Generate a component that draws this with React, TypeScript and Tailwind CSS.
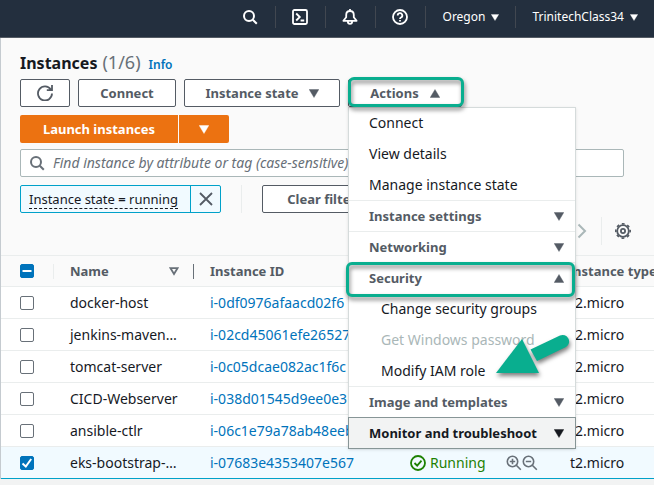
import type { ReactNode } from "react";

type Instance = { name: string; id: string; state?: string; selected?: boolean };

const instances: Instance[] = [
  { name: "docker-host", id: "i-0df0976afaacd02f6" },
  { name: "jenkins-maven…", id: "i-02cd45061efe26527" },
  { name: "tomcat-server", id: "i-0c05dcae082ac1f6c" },
  { name: "CICD-Webserver", id: "i-038d01545d9ee0e3" },
  { name: "ansible-ctlr", id: "i-06c1e79a78ab48eeb" },
  { name: "eks-bootstrap-…", id: "i-07683e4353407e567", state: "Running", selected: true },
];

function Triangle({ up = false, className = "" }: { up?: boolean; className?: string }) {
  return (
    <svg viewBox="0 0 10 9" className={`shrink-0 ${className}`} fill="currentColor" aria-hidden="true">
      <path d={up ? "M5 0.5 9.8 8.5H0.2z" : "M0.2 0.5H9.8L5 8.5z"} stroke="currentColor" strokeWidth="0.4" strokeLinejoin="round" />
    </svg>
  );
}

function SearchIcon({ className }: { className: string }) {
  return (
    <svg viewBox="0 0 16 16" className={className} fill="none" stroke="currentColor" strokeWidth="2" aria-hidden="true">
      <circle cx="7" cy="7" r="5" />
      <path d="m10.8 10.8 4 4" />
    </svg>
  );
}

function Checkbox({ label, state }: { label: string; state: "off" | "on" | "mixed" }) {
  return (
    <span className="grid size-[14px]">
      <input
        type="checkbox"
        aria-label={label}
        defaultChecked={state !== "off"}
        className="col-start-1 row-start-1 size-[14px] appearance-none rounded-xs border border-[#687078] bg-white checked:border-[#0073bb] checked:bg-[#0073bb]"
      />
      {state !== "off" && (
        <svg viewBox="0 0 14 14" className="pointer-events-none col-start-1 row-start-1 size-[14px]" fill="none" stroke="#fff" strokeWidth="2" aria-hidden="true">
          <path d={state === "on" ? "M2.5 7.5 5.8 10.5 11.2 3" : "M2.5 7H11.5"} />
        </svg>
      )}
    </span>
  );
}

function TopButton({ label, children }: { label: string; children: ReactNode }) {
  return (
    <button aria-label={label} className="flex h-[22px] w-[50px] items-center justify-center border-r border-[#414750]">
      {children}
    </button>
  );
}

function TopBar() {
  return (
    <header className="flex h-[38px] items-center justify-end border-b border-[#545b64] bg-[#232f3e] pr-4 pb-[3px] text-xs text-white">
      <TopButton label="Search">
        <SearchIcon className="size-4" />
      </TopButton>
      <TopButton label="CloudShell">
        <svg viewBox="0 0 16 16" className="size-4" fill="none" stroke="currentColor" strokeWidth="1.8">
          <rect x="1" y="1" width="14" height="14" rx="1.5" />
          <path d="m4.2 4.5 3.6 3.5-3.6 3.5M8.6 11.5h3.6" />
        </svg>
      </TopButton>
      <TopButton label="Notifications">
        <svg viewBox="0 0 16 16" className="size-4" fill="none" stroke="currentColor" strokeWidth="1.8" strokeLinejoin="round">
          <path d="M8 2C5.6 2 4.2 3.8 4.2 6v2.3L1.4 11.8h13.2L11.8 8.3V6C11.8 3.8 10.4 2 8 2zM8 0v2M5.8 12.2a2.2 2.6 0 0 0 4.4 0" />
        </svg>
      </TopButton>
      <TopButton label="Help">
        <svg viewBox="0 0 16 16" className="size-4" fill="none" stroke="currentColor" strokeWidth="1.8">
          <circle cx="8" cy="8" r="7" />
          <path d="M5.7 6.5a2.3 2.3 0 1 1 3.3 2c-.7.4-1 .7-1 1.5M8 11v1.6" />
        </svg>
      </TopButton>
      <button className="flex h-[22px] items-center gap-[6px] border-r border-[#414750] pr-4 pl-[17px]">
        Oregon
        <Triangle className="h-[7px] w-2" />
      </button>
      <button className="flex h-[22px] items-center gap-[6px] pl-4">
        TrinitechClass34
        <Triangle className="h-[7px] w-2" />
      </button>
    </header>
  );
}

function MenuItem({ children, disabled = false, nested = false }: { children: ReactNode; disabled?: boolean; nested?: boolean }) {
  return (
    <li>
      <button
        disabled={disabled}
        className={`block h-[31px] w-full text-left disabled:text-[#aab7b8] ${nested ? "pl-8" : "pl-5"}`}
      >
        {children}
      </button>
    </li>
  );
}

function MenuGroup({ label, open = false, active = false }: { label: string; open?: boolean; active?: boolean }) {
  return (
    <li className={active ? "relative -mx-px -mb-px border border-[#879596] bg-[#f2f3f3] text-[#16191f]" : "relative border-t border-[#eaeded] text-[#545b64]"}>
      <button aria-expanded={open} className="flex h-[30px] w-full items-center justify-between pr-[11px] pl-5 text-[13px] font-bold whitespace-nowrap">
        {label}
        <Triangle up={open} className="h-[9px] w-[10px]" />
      </button>
      {open && (
        <span className="pointer-events-none absolute right-0 -left-[3px] -top-px z-10 h-[35px] rounded-md border-3 border-[#09ae8f] drop-shadow-[1px_3px_2px_rgba(0,0,0,0.5)]" />
      )}
    </li>
  );
}

function ActionsMenu() {
  return (
    <div className="absolute top-[28px] left-0 z-20 w-[228px] border border-[#d5dbdb] bg-white leading-[29px] text-[#16191f] shadow-sm">
      <ul className="-mt-px">
        <MenuItem>Connect</MenuItem>
        <MenuItem>View details</MenuItem>
        <MenuItem>Manage instance state</MenuItem>
        <MenuGroup label="Instance settings" />
        <MenuGroup label="Networking" />
        <MenuGroup label="Security" open />
        <MenuItem nested>Change security groups</MenuItem>
        <MenuItem nested disabled>Get Windows password</MenuItem>
        <MenuItem nested>Modify IAM role</MenuItem>
        <MenuGroup label="Image and templates" />
        <MenuGroup label="Monitor and troubleshoot" active />
      </ul>
      <svg viewBox="0 0 84 50" className="pointer-events-none absolute top-[224px] left-[143px] h-[50px] w-[84px] drop-shadow-[1px_3px_2px_rgba(0,0,0,0.5)]" aria-hidden="true">
        <path d="M4 41 30 7 47 41z" fill="#09ae8f" />
        <path d="M38.5 17.5 68 3.5a6.5 6.5 0 0 1 6 11.5L45 29z" fill="#09ae8f" />
      </svg>
    </div>
  );
}

const button = "flex h-7 items-center justify-center rounded-xs border border-[#545b64] bg-white text-[13px] font-bold text-[#545b64] whitespace-nowrap";

function Toolbar() {
  return (
    <section className="px-[19px] pt-3">
      <h1 className="flex h-7 items-baseline text-base leading-6 font-bold">
        Instances
        <span className="ml-[5px] text-lg leading-6 font-normal text-[#687078]">(1/6)</span>
        <a href="#info" className="ml-2 text-xs font-semibold text-[#0073bb]">Info</a>
      </h1>
      <div className="mt-px flex flex-wrap gap-2">
        <button aria-label="Refresh" className={`${button} w-[50px]`}>
          <svg viewBox="0 0 16 16" className="size-4" fill="none" stroke="currentColor" strokeWidth="1.8" aria-hidden="true">
            <path d="M13.8 4.5A7 7 0 1 0 15 8.5M15 0v5.2H9.8" />
          </svg>
        </button>
        <button className={`${button} w-[98px]`}>Connect</button>
        <button className={`${button} w-[156px] gap-[10px]`}>
          Instance state
          <Triangle className="h-[9px] w-[10px]" />
        </button>
        <div className="relative">
          <button aria-expanded="true" className={`${button} w-[114px] gap-[11px]`}>
            Actions
            <Triangle up className="h-[9px] w-[10px]" />
          </button>
          <ActionsMenu />
          <span className="pointer-events-none absolute -top-[2px] left-0 z-30 h-[30px] w-[116px] rounded-md border-3 border-[#09ae8f] drop-shadow-[1px_3px_2px_rgba(0,0,0,0.5)]" />
        </div>
      </div>
      <div className="mt-2 flex gap-px text-[13px] font-bold text-white">
        <button className="h-7 w-[158px] rounded-l-xs bg-[#ec7211]">Launch instances</button>
        <button aria-label="More launch options" className="flex h-7 w-[50px] items-center justify-center rounded-r-xs bg-[#ec7211]">
          <Triangle className="h-[9px] w-[10px]" />
        </button>
      </div>
      <label className="mt-[6px] mr-[11px] flex h-7 items-center gap-2 rounded-xs border border-[#aab7b8] bg-white pl-2 text-[#687078]">
        <SearchIcon className="size-4 shrink-0" />
        <input
          type="text"
          aria-label="Find instance"
          placeholder="Find instance by attribute or tag (case-sensitive)"
          className="w-full min-w-0 bg-transparent outline-none placeholder:text-[#687078] placeholder:italic"
        />
      </label>
      <div className="mt-2 flex items-center">
        <div className="flex h-7 items-center rounded-xs border border-[#00a1c9] bg-[#f1faff]">
          <span className="w-[169px] pl-2 whitespace-nowrap">
            <button className="border-b border-dashed border-[#16191f] text-[13px] leading-[17px]">
              Instance state <b>=</b> running
            </button>
          </span>
          <button aria-label="Remove filter" className="flex h-full w-[30px] items-center justify-center border-l border-[#00a1c9] text-[#545b64]">
            <svg viewBox="0 0 14 14" className="size-[14px]" fill="none" stroke="currentColor" strokeWidth="1.8">
              <path d="m1 1 12 12M13 1 1 13" />
            </svg>
          </button>
        </div>
        <span className="ml-5 h-7 w-px bg-[#eaeded]" />
        <button className={`${button} ml-5 w-[126px]`}>Clear filters</button>
      </div>
      <div className="flex h-[42px] items-center justify-end pr-1 pb-[7px]">
        <button aria-label="Next page" className="pr-[14px] text-[#aab7b8]">
          <svg viewBox="0 0 10 16" className="h-4 w-[10px]" fill="none" stroke="currentColor" strokeWidth="2">
            <path d="m1.5 1.5 6.5 6.5-6.5 6.5" />
          </svg>
        </button>
        <button aria-label="Preferences" className="flex h-7 items-center border-l border-[#eaeded] pl-[13px] text-[#545b64]">
          <svg viewBox="0 0 16 16" className="size-4" fill="none" stroke="currentColor">
            <circle cx="8" cy="8" r="5.8" strokeWidth="1.8" />
            <circle cx="8" cy="8" r="7.2" strokeWidth="1.6" strokeDasharray="2.827 2.827" strokeDashoffset="1.4" />
            <circle cx="8" cy="8" r="2.1" strokeWidth="1.8" />
          </svg>
        </button>
      </div>
    </section>
  );
}

function InstanceTable() {
  return (
    <table className="w-full table-fixed border-collapse text-left whitespace-nowrap">
      <colgroup>
        <col className="w-[53px]" />
        <col className="w-[140px]" />
        <col className="w-[200px]" />
        <col className="w-[160px]" />
        <col />
      </colgroup>
      <thead className="border-y border-[#eaeded] text-[13px] text-[#545b64]">
        <tr className="h-[31px]">
          <th className="pl-[19px]">
            <div className="flex h-[15px] items-center border-r border-[#eaeded]">
              <Checkbox label="Select all instances" state="mixed" />
            </div>
          </th>
          <th className="pl-4 font-bold">
            <div className="flex h-[15px] items-center justify-between border-r border-[#687078] pr-[14px]">
              Name
              <svg viewBox="0 0 10 9" className="h-[9px] w-[10px]" fill="none" stroke="#687078" strokeWidth="1.8" aria-hidden="true">
                <path d="M1.5 1.2H8.5L5 7z" />
              </svg>
            </div>
          </th>
          <th className="pl-4 font-bold">Instance ID</th>
          <th aria-label="State" />
          <th className="pl-[14px] font-bold">Instance type</th>
        </tr>
      </thead>
      <tbody>
        {instances.map((item) => (
          <tr
            key={item.id}
            className={item.selected ? "h-8 border-y border-[#00a1c9] bg-[#f1faff]" : "h-8 border-b border-[#eaeded] bg-white"}
          >
            <td className="pl-[19px]">
              <Checkbox label={`Select ${item.name}`} state={item.selected ? "on" : "off"} />
            </td>
            <td className="pl-4">{item.name}</td>
            <td className="pl-4">
              <a href={`#${item.id}`} className="text-[#0073bb]">{item.id}</a>
            </td>
            <td className="pl-4">
              {item.state && (
                <div className="flex items-center">
                  <svg viewBox="0 0 16 16" className="size-4" fill="none" stroke="#1d8102" strokeWidth="1.8" aria-hidden="true">
                    <circle cx="8" cy="8" r="7" />
                    <path d="m4.5 8 2.7 2.7 4.3-5" />
                  </svg>
                  <span className="ml-1 w-[76px] text-[#1d8102]">{item.state}</span>
                  <button aria-label="Filter by this state" className="text-[#687078]">
                    <svg viewBox="0 0 16 16" className="size-4" fill="none" stroke="currentColor" strokeWidth="1.6">
                      <circle cx="6.5" cy="6.5" r="5.2" />
                      <path d="m10.3 10.3 4.5 4.5M3.8 6.5h5.4M6.5 3.8v5.4" />
                    </svg>
                  </button>
                  <button aria-label="Exclude this state" className="text-[#687078]">
                    <svg viewBox="0 0 16 16" className="size-4" fill="none" stroke="currentColor" strokeWidth="1.6">
                      <circle cx="6.5" cy="6.5" r="5.2" />
                      <path d="m10.3 10.3 4.5 4.5M3.8 6.5h5.4" />
                    </svg>
                  </button>
                </div>
              )}
            </td>
            <td className="pl-4">t2.micro</td>
          </tr>
        ))}
      </tbody>
    </table>
  );
}

export default function App() {
  return (
    <div className="min-h-screen overflow-x-hidden bg-[#f2f3f3] font-['Noto_Sans',sans-serif] text-sm leading-5 text-[#16191f]">
      <TopBar />
      <main className="border-l border-[#c5cbd0] bg-[#fafafa]">
        <Toolbar />
        <InstanceTable />
      </main>
    </div>
  );
}
